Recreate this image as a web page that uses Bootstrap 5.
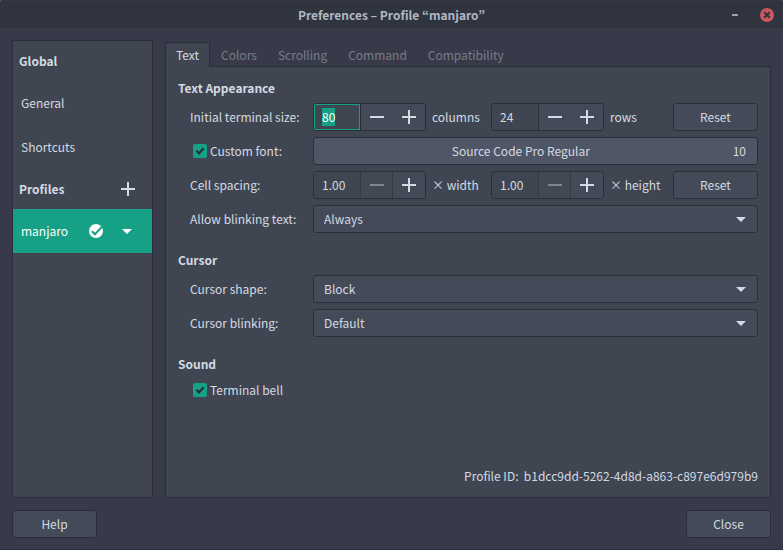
<!DOCTYPE html>
<html lang="en">
<head>
<meta charset="utf-8">
<meta name="viewport" content="width=device-width, initial-scale=1">
<title>Preferences – Profile “manjaro”</title>
<link href="https://cdn.jsdelivr.net/npm/bootstrap@5.3.0/dist/css/bootstrap.min.css" rel="stylesheet">
<style>
:root {
  --win: #383a49;
  --title: #2f343f;
  --panel: #404651;
  --ctl: #444a58;
  --line: #2b2e39;
  --text: #d3dae3;
  --accent: #16a085;
}
html { background: #565a62; }
body {
  background: transparent;
  color: var(--text);
  font-family: "Noto Sans CJK KR", "Noto Sans", sans-serif;
  font-size: 12px;
  line-height: 18px;
}
.pref-window { background: var(--win); border-radius: 4px 4px 0 0; border-bottom: 1px solid var(--line); overflow: hidden; }
.titlebar { display: grid; grid-template-columns: 1fr auto 1fr; height: 28px; background: var(--title); border-top: 1px solid #353945; padding: 0 9px; }
.titlebar h1 { font-size: 12px; line-height: 18px; font-weight: 700; color: #b0b7c3; }
.title-buttons { gap: 18px; }
.win-btn { background: none; border: 0; padding: 0; width: 14px; height: 14px; display: flex; }
.pref-body { gap: 12px; padding: 12px; }
.pref-footer { padding: 0 12px 11px; }
.sidebar { width: 141px; border: 1px solid var(--line); background: var(--panel); }
.side-head { height: 40px; padding: 0 17px 0 6px; font-size: 12px; line-height: 18px; font-weight: 700; }
.side-item { height: 44px; padding: 0 20px 0 8px; gap: 19px; color: var(--text); text-decoration: none; }
.side-item.active { background: var(--accent); color: #fff; }
.bare-btn { background: none; border: 0; padding: 0; color: inherit; display: flex; }
.pref-tabs { --bs-nav-tabs-border-width: 0; gap: 1px; padding-top: 2px; }
.pref-tabs .nav-link { padding: 4px 10px 2px; line-height: 18px; color: #777d88; border: 0; border-radius: 0; margin: 0; }
.pref-tabs .nav-link.active { background: var(--panel); color: var(--text); border: 1px solid var(--line); border-bottom: 0; padding: 3px 10px; margin-bottom: -1px; position: relative; }
.pref-page { background: var(--panel); border: 1px solid var(--line); padding: 12px; }
.sect { margin-bottom: 18px; }
.sect h2 { font-size: 12px; line-height: 18px; font-weight: 700; margin: 0 0 6px; }
.form-line { display: grid; grid-template-columns: 117px 1fr; column-gap: 6px; align-items: center; margin: 0 0 6px 12px; }
.form-line:last-child { margin-bottom: 0; }
.fields { display: grid; grid-template-columns: 113px 53px 113px 1fr 85px; column-gap: 6px; align-items: center; }
.fields label, .fields span, .form-line > label { white-space: nowrap; }
.spin { display: flex; height: 28px; border: 1px solid var(--line); border-radius: 3px; overflow: hidden; }
.spin .form-control { flex: 1 1 0; min-width: 0; background: var(--panel); color: var(--text); border: 0; border-radius: 0; font-size: 12px; line-height: 18px; min-height: 0; padding: 0 8px; box-shadow: none; }
.spin .form-control:focus { box-shadow: inset 0 0 0 1px var(--accent); }
.spin .form-control::selection { background: var(--accent); color: #fff; }
.spin button { flex: 0 0 32px; background: var(--ctl); border: 0; padding: 0; color: var(--text); display: flex; align-items: center; justify-content: center; }
.spin button:first-of-type { border-left: 1px solid var(--line); flex-basis: 33px; }
.spin button:disabled { background: #424854; color: #7e8592; border-right: 1px solid #363a46; border-left-color: #363a46; }
.btn-pref { --bs-btn-color: var(--text); --bs-btn-bg: var(--ctl); --bs-btn-border-color: var(--line); --bs-btn-hover-color: #fff; --bs-btn-hover-bg: #505666; --bs-btn-hover-border-color: var(--line); --bs-btn-font-size: 12px; --bs-btn-line-height: 18px; --bs-btn-padding-y: 4px; --bs-btn-padding-x: 11px; --bs-btn-border-radius: 3px; min-width: 85px; }
.btn-font { --bs-btn-bg: #515666; }
.pref-select {
  height: 28px; padding: 0 32px 0 10px; font-size: 12px; line-height: 18px; color: var(--text);
  background-color: var(--ctl); border: 1px solid var(--line); border-radius: 3px;
  background-image: url("data:image/svg+xml,%3Csvg xmlns='http://www.w3.org/2000/svg' viewBox='0 0 10 5'%3E%3Cpath fill='%23d3dae3' d='M0 0h10L5 5z'/%3E%3C/svg%3E");
  background-size: 10px 5px; background-position: right 11px center;
}
.check-line { display: flex; align-items: center; gap: 3px; padding-left: 3px; min-height: 22px; }
.check-line .form-check-input {
  width: 14px; height: 14px; margin: 0; border: 0; border-radius: 2px; flex: none;
}
.check-line .form-check-input:checked {
  background-color: var(--accent);
  background-image: url("data:image/svg+xml,%3Csvg xmlns='http://www.w3.org/2000/svg' viewBox='0 0 14 14'%3E%3Cpath fill='none' stroke='%232b2e39' stroke-width='2.2' d='M3.4 6.8l2.6 2.6L10.7 4.3'/%3E%3C/svg%3E");
}
</style>
</head>
<body>
<div class="pref-window d-flex flex-column min-vh-100">
  <header class="titlebar align-items-center">
    <span></span>
    <h1 class="m-0">Preferences – Profile “manjaro”</h1>
    <div class="title-buttons d-flex justify-content-end">
      <button class="win-btn" type="button" aria-label="Minimize"><svg width="14" height="14"><path fill="#9ba1ad" d="M4 6h6v2H4z"/></svg></button>
      <button class="win-btn" type="button" aria-label="Close window"><svg width="14" height="14"><circle cx="7" cy="7" r="7" fill="#cc575d"/><path d="M4.2 4.2l5.6 5.6M9.8 4.2l-5.6 5.6" stroke="#2f343f" stroke-width="2"/></svg></button>
    </div>
  </header>

  <div class="pref-body d-flex flex-fill">
    <nav class="sidebar flex-shrink-0" aria-label="Preferences sections">
      <h2 class="side-head d-flex align-items-center m-0">Global</h2>
      <a class="side-item d-flex align-items-center" href="#general">General</a>
      <a class="side-item d-flex align-items-center" href="#shortcuts">Shortcuts</a>
      <div class="side-head d-flex align-items-center justify-content-between">
        <h2 class="side-head d-flex align-items-center m-0 p-0">Profiles</h2>
        <button class="bare-btn" type="button" aria-label="New profile"><svg width="14" height="14"><path fill="currentColor" d="M6 0h2v6h6v2H8v6H6V8H0V6h6z"/></svg></button>
      </div>
      <div class="side-item active d-flex align-items-center">
        <a class="text-reset text-decoration-none flex-fill" href="#manjaro">manjaro</a>
        <svg width="14" height="14" role="img" aria-label="Default profile"><circle cx="7" cy="7" r="7" fill="#fff"/><path d="M3 7.2l3 3 7-7.6" fill="none" stroke="#16a085" stroke-width="2"/></svg>
        <button class="bare-btn" type="button" aria-label="Profile menu"><svg width="10" height="5"><path fill="currentColor" d="M0 0h10L5 5z"/></svg></button>
      </div>
    </nav>

    <main class="d-flex flex-column flex-fill">
      <ul class="nav nav-tabs pref-tabs" role="tablist">
        <li class="nav-item"><button class="nav-link active" type="button" role="tab" aria-selected="true">Text</button></li>
        <li class="nav-item"><button class="nav-link" type="button" role="tab">Colors</button></li>
        <li class="nav-item"><button class="nav-link" type="button" role="tab">Scrolling</button></li>
        <li class="nav-item"><button class="nav-link" type="button" role="tab">Command</button></li>
        <li class="nav-item"><button class="nav-link" type="button" role="tab">Compatibility</button></li>
      </ul>
      <div class="pref-page d-flex flex-column flex-fill">
        <section class="sect">
          <h2>Text Appearance</h2>
          <div class="form-line">
            <label for="cols">Initial terminal size:</label>
            <div class="fields">
              <div class="spin">
                <input class="form-control" id="cols" type="text" value="80">
                <button type="button" aria-label="Fewer columns"><svg width="14" height="14"><path fill="currentColor" d="M0 6h14v2H0z"/></svg></button>
                <button type="button" aria-label="More columns"><svg width="14" height="14"><path fill="currentColor" d="M6 0h2v6h6v2H8v6H6V8H0V6h6z"/></svg></button>
              </div>
              <span>columns</span>
              <div class="spin">
                <input class="form-control" id="rows" type="text" value="24">
                <button type="button" aria-label="Fewer rows"><svg width="14" height="14"><path fill="currentColor" d="M0 6h14v2H0z"/></svg></button>
                <button type="button" aria-label="More rows"><svg width="14" height="14"><path fill="currentColor" d="M6 0h2v6h6v2H8v6H6V8H0V6h6z"/></svg></button>
              </div>
              <label for="rows">rows</label>
              <button class="btn btn-pref" type="button">Reset</button>
            </div>
          </div>
          <div class="form-line">
            <div class="check-line">
              <input class="form-check-input" type="checkbox" id="font" checked>
              <label for="font">Custom font:</label>
            </div>
            <button class="btn btn-pref btn-font d-flex" type="button"><span class="flex-fill pe-3">Source Code Pro Regular</span><span>10</span></button>
          </div>
          <div class="form-line">
            <label for="cellw">Cell spacing:</label>
            <div class="fields">
              <div class="spin">
                <input class="form-control" id="cellw" type="text" value="1.00">
                <button type="button" disabled aria-label="Narrower"><svg width="14" height="14"><path fill="currentColor" d="M0 6h14v2H0z"/></svg></button>
                <button type="button" aria-label="Wider"><svg width="14" height="14"><path fill="currentColor" d="M6 0h2v6h6v2H8v6H6V8H0V6h6z"/></svg></button>
              </div>
              <span>× width</span>
              <div class="spin">
                <input class="form-control" id="cellh" type="text" value="1.00">
                <button type="button" disabled aria-label="Shorter"><svg width="14" height="14"><path fill="currentColor" d="M0 6h14v2H0z"/></svg></button>
                <button type="button" aria-label="Taller"><svg width="14" height="14"><path fill="currentColor" d="M6 0h2v6h6v2H8v6H6V8H0V6h6z"/></svg></button>
              </div>
              <label for="cellh">× height</label>
              <button class="btn btn-pref" type="button">Reset</button>
            </div>
          </div>
          <div class="form-line">
            <label for="blinktext">Allow blinking text:</label>
            <select class="form-select pref-select" id="blinktext"><option>Always</option></select>
          </div>
        </section>
        <section class="sect">
          <h2>Cursor</h2>
          <div class="form-line">
            <label for="shape">Cursor shape:</label>
            <select class="form-select pref-select" id="shape"><option>Block</option></select>
          </div>
          <div class="form-line">
            <label for="blink">Cursor blinking:</label>
            <select class="form-select pref-select" id="blink"><option>Default</option></select>
          </div>
        </section>
        <section class="sect">
          <h2>Sound</h2>
          <div class="form-line">
            <div class="check-line">
              <input class="form-check-input" type="checkbox" id="bell" checked>
              <label for="bell">Terminal bell</label>
            </div>
          </div>
        </section>
        <p class="mt-auto mb-0 text-end">Profile ID:&nbsp; b1dcc9dd-5262-4d8d-a863-c897e6d979b9</p>
      </div>
    </main>
  </div>

  <footer class="pref-footer d-flex justify-content-between">
    <button class="btn btn-pref" type="button">Help</button>
    <button class="btn btn-pref" type="button">Close</button>
  </footer>
</div>
<script src="https://cdn.jsdelivr.net/npm/bootstrap@5.3.0/dist/js/bootstrap.bundle.min.js"></script>
<script>
  const cols = document.getElementById('cols');
  cols.focus();
  cols.select();
</script>
</body>
</html>
